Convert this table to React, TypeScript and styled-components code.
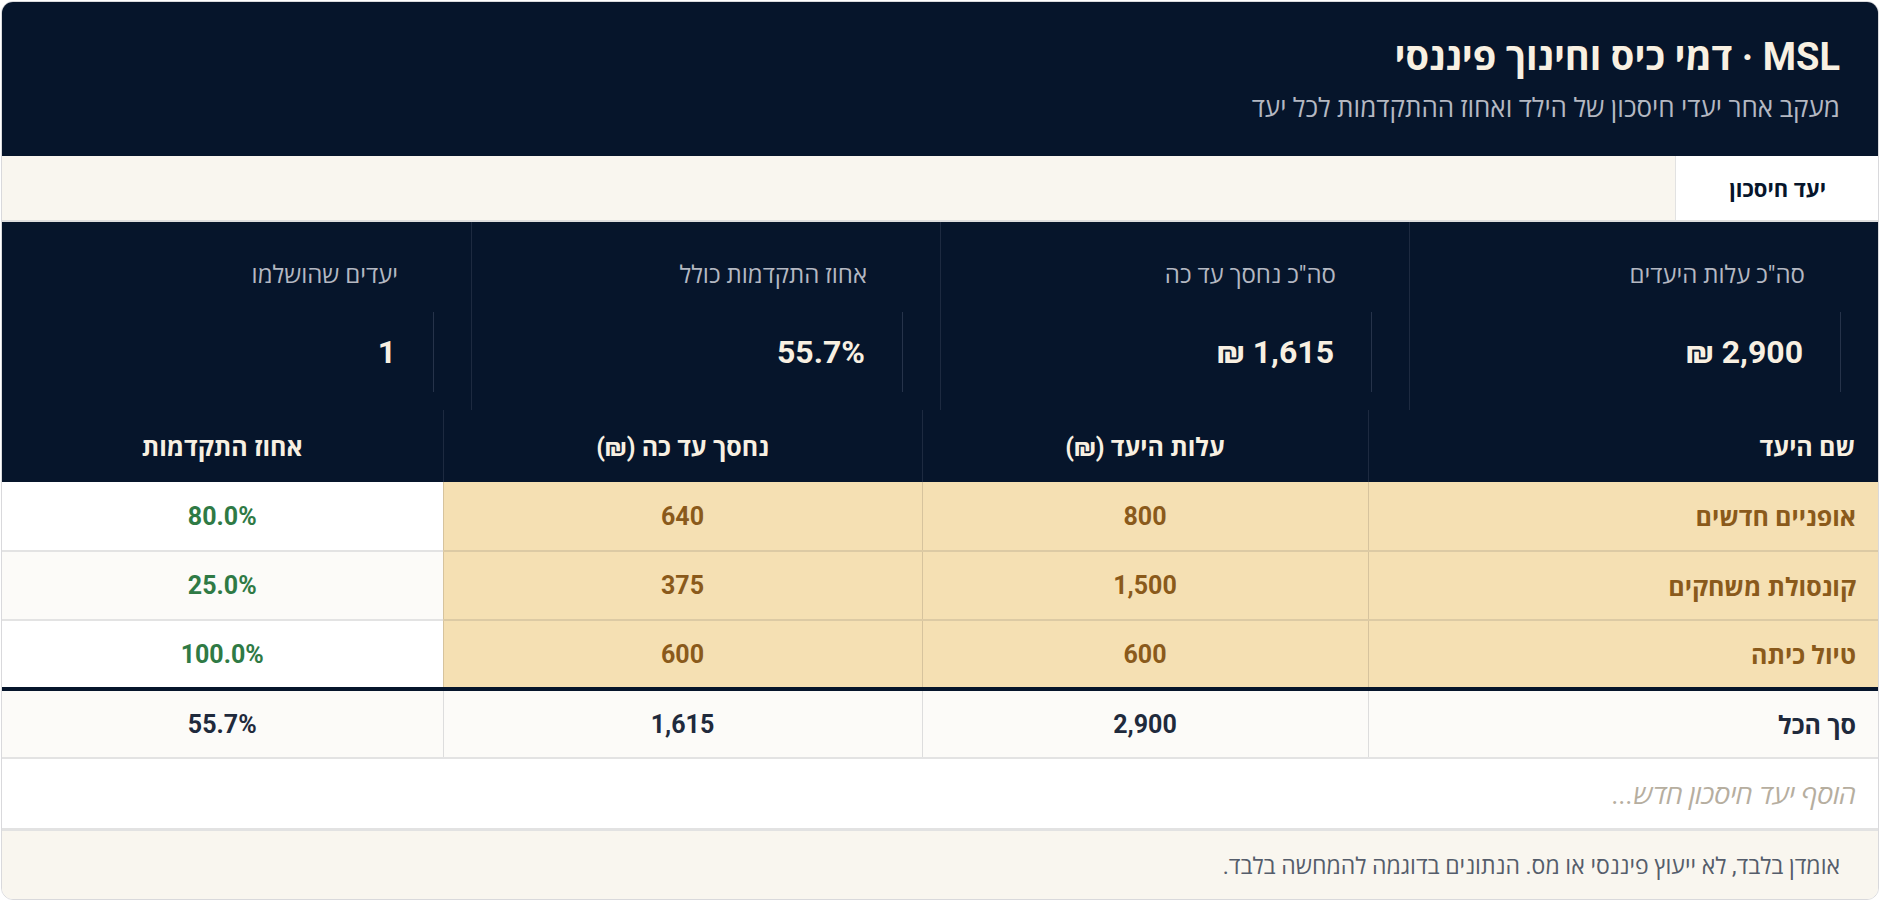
import React from "react";
import styled, { createGlobalStyle } from "styled-components";

const Global = createGlobalStyle`
  html, body { margin: 0; padding: 0; background: #ffffff; }
  body { font-family: Roboto, "Open Sans", sans-serif; }
  * { box-sizing: border-box; }
`;

const NAVY = "#06152b";
const CREAM = "#f8f0e2";

const Card = styled.div`
  direction: rtl;
  margin: 1px;
  border: 1px solid #d9d9dc;
  border-radius: 12px;
  overflow: hidden;
  background: #ffffff;
`;

const Header = styled.header`
  background: ${NAVY};
  padding: 32px 38px 0 38px;
  height: 154px;
`;

const Title = styled.h1`
  margin: 0;
  font-size: 38px;
  line-height: 46px;
  font-weight: 700;
  color: ${CREAM};
  white-space: nowrap;
`;

const Subtitle = styled.p`
  margin: 12px 0 0 0;
  font-size: 26px;
  line-height: 32px;
  color: #b4b8c2;
  white-space: nowrap;
`;

const TabBar = styled.nav`
  display: flex;
  background: #f9f6ef;
  border-bottom: 2px solid #dedede;
  height: 66px;
`;

const Tab = styled.div<{ $active?: boolean }>`
  display: flex;
  align-items: center;
  padding: 0 52px 0 0;
  width: 203px;
  background: ${(p) => (p.$active ? "#ffffff" : "transparent")};
  border-inline-end: 1px solid #e2e2e2;
  font-size: 22px;
  font-weight: 700;
  color: ${NAVY};
  white-space: nowrap;
`;

const Stats = styled.section`
  display: grid;
  grid-template-columns: repeat(4, 1fr);
  background: ${NAVY};
`;

const Stat = styled.div<{ $last?: boolean }>`
  padding: 38px 37px 18px 37px;
  border-inline-end: ${(p) => (p.$last ? "none" : "1px solid #1d2a40")};
`;

const StatLabel = styled.div`
  margin-inline-start: 36px;
  font-size: 24px;
  line-height: 30px;
  color: #b4b8c2;
  white-space: nowrap;
`;

const StatValue = styled.div`
  margin-top: 22px;
  height: 80px;
  display: flex;
  align-items: center;
  padding-inline-start: 37px;
  border-inline-start: 1px solid #26334a;
  font-size: 32px;
  font-weight: 700;
  color: ${CREAM};
  white-space: nowrap;
`;

const Table = styled.table`
  width: 100%;
  border-collapse: collapse;
  table-layout: fixed;
`;

const HeadCell = styled.th<{ $align?: string; $last?: boolean }>`
  height: 72px;
  background: ${NAVY};
  color: ${CREAM};
  font-size: 25px;
  font-weight: 700;
  text-align: ${(p) => p.$align || "center"};
  padding: 0 23px;
  border-inline-end: ${(p) => (p.$last ? "none" : "1px solid #1d2a40")};
  white-space: nowrap;
`;

type Tone = "tan" | "plain" | "alt" | "total";

const cellBg: Record<Tone, string> = {
  tan: "#f5e0b3",
  plain: "#ffffff",
  alt: "#fcfbf8",
  total: "#fcfbf8",
};

const Cell = styled.td<{ $tone: Tone; $align?: string; $color: string; $last?: boolean; $top?: boolean }>`
  height: 69px;
  padding: 0 22px;
  background: ${(p) => cellBg[p.$tone]};
  color: ${(p) => p.$color};
  font-size: 25px;
  font-weight: 700;
  text-align: ${(p) => p.$align || "center"};
  white-space: nowrap;
  border-bottom: 2px solid ${(p) => (p.$tone === "tan" ? "#dccaa4" : "#e3e3e3")};
  border-inline-end: ${(p) =>
    p.$last ? "none" : `1px solid ${p.$tone === "tan" ? "#d6c39d" : "#dddddd"}`};
  border-top: ${(p) => (p.$top ? `4px solid ${NAVY}` : "none")};
`;

const AddCell = styled.td`
  height: 70px;
  padding: 0 22px;
  background: #ffffff;
  color: #b6ae9f;
  font-size: 27px;
  font-style: italic;
  text-align: right;
  white-space: nowrap;
`;

const Footer = styled.footer`
  background: #f9f6ef;
  border-top: 3px solid #e2e2e2;
  height: 71px;
  display: flex;
  align-items: center;
  padding: 0 38px;
  font-size: 23px;
  color: #555d6b;
  white-space: nowrap;
`;

const BROWN = "#8a5a1b";
const GREEN = "#2f7a45";
const DARK = "#1f2a3c";

const goals = [
  { name: "אופניים חדשים", cost: "800", saved: "640", pct: "80.0%" },
  { name: "קונסולת משחקים", cost: "1,500", saved: "375", pct: "25.0%" },
  { name: "טיול כיתה", cost: "600", saved: "600", pct: "100.0%" },
];

const stats = [
  { label: 'סה"כ עלות היעדים', value: "2,900 ₪" },
  { label: 'סה"כ נחסך עד כה', value: "1,615 ₪" },
  { label: "אחוז התקדמות כולל", value: "55.7%" },
  { label: "יעדים שהושלמו", value: "1" },
];

export default function App() {
  return (
    <>
      <Global />
      <Card>
        <Header>
          <Title>MSL · דמי כיס וחינוך פיננסי</Title>
          <Subtitle>מעקב אחר יעדי חיסכון של הילד ואחוז ההתקדמות לכל יעד</Subtitle>
        </Header>
        <TabBar>
          <Tab $active>יעד חיסכון</Tab>
        </TabBar>
        <Stats>
          {stats.map((s, i) => (
            <Stat key={s.label} $last={i === stats.length - 1}>
              <StatLabel>{s.label}</StatLabel>
              <StatValue>{s.value}</StatValue>
            </Stat>
          ))}
        </Stats>
        <Table>
          <colgroup>
            <col style={{ width: 510 }} />
            <col style={{ width: 446 }} />
            <col style={{ width: 479 }} />
            <col />
          </colgroup>
          <thead>
            <tr>
              <HeadCell $align="right">שם היעד</HeadCell>
              <HeadCell>עלות היעד (₪)</HeadCell>
              <HeadCell>נחסך עד כה (₪)</HeadCell>
              <HeadCell $last>אחוז התקדמות</HeadCell>
            </tr>
          </thead>
          <tbody>
            {goals.map((g, i) => (
              <tr key={g.name}>
                <Cell $tone="tan" $color={BROWN} $align="right">{g.name}</Cell>
                <Cell $tone="tan" $color={BROWN}>{g.cost}</Cell>
                <Cell $tone="tan" $color={BROWN}>{g.saved}</Cell>
                <Cell $tone={i % 2 === 1 ? "alt" : "plain"} $color={GREEN} $last>{g.pct}</Cell>
              </tr>
            ))}
            <tr>
              <Cell $tone="total" $color={DARK} $align="right" $top>סך הכל</Cell>
              <Cell $tone="total" $color={DARK} $top>2,900</Cell>
              <Cell $tone="total" $color={DARK} $top>1,615</Cell>
              <Cell $tone="total" $color={DARK} $top $last>55.7%</Cell>
            </tr>
            <tr>
              <AddCell colSpan={4}>הוסף יעד חיסכון חדש...</AddCell>
            </tr>
          </tbody>
        </Table>
        <Footer>אומדן בלבד, לא ייעוץ פיננסי או מס. הנתונים בדוגמה להמחשה בלבד.</Footer>
      </Card>
    </>
  );
}
